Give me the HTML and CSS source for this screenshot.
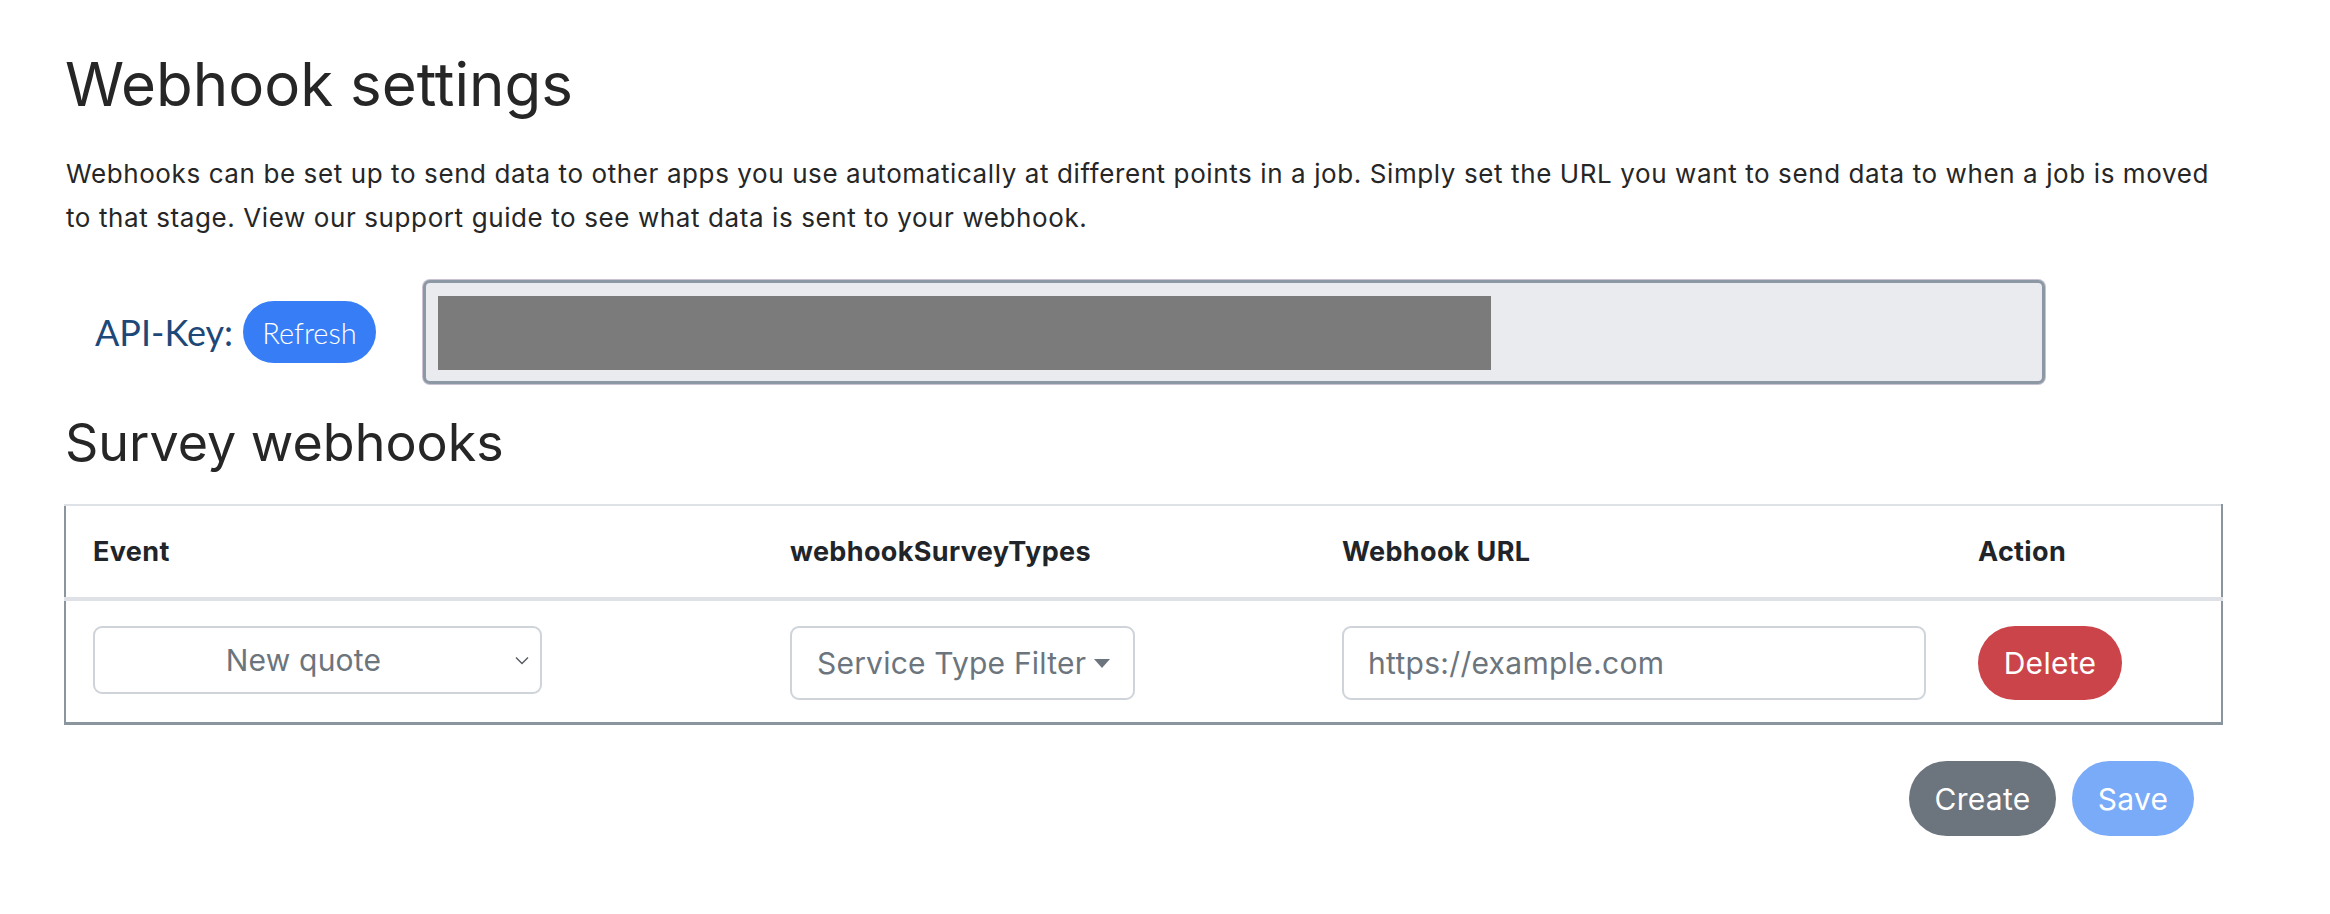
FILE: index.html
```html
<!DOCTYPE html>
<html lang="en">

<head>
    <meta charset="UTF-8">
    <meta name="viewport" content="width=device-width, initial-scale=1.0">
    <title>Webhook settings</title>
    <link rel="stylesheet" href="styles.css">
</head>

<body>
    <div class="container">
        <h1>Webhook settings</h1>
        <p class="intro">Webhooks can be set up to send data to other apps you use automatically at different points in a job. Simply set the URL you want to send data to when a job is moved to that stage. View our support guide to see what data is sent to your webhook.</p>

        <div class="api-row">
            <div class="api-label">
                <span class="api-text">API-Key:</span>
                <button class="btn btn-refresh">Refresh</button>
            </div>
            <div class="key-box">
                <div class="key-mask"></div>
            </div>
        </div>

        <h2>Survey webhooks</h2>

        <table class="hooks">
            <colgroup>
                <col class="col-event">
                <col class="col-types">
                <col class="col-url">
                <col class="col-action">
            </colgroup>
            <thead>
                <tr>
                    <th>Event</th>
                    <th>webhookSurveyTypes</th>
                    <th>Webhook URL</th>
                    <th>Action</th>
                </tr>
            </thead>
            <tbody>
                <tr>
                    <td>
                        <div class="select-wrap">
                            <select class="event-select">
                                <option>New quote</option>
                            </select>
                            <svg class="chevron" width="14" height="9" viewBox="0 0 14 9">
                                <path d="M1 1.5 L7 7.5 L13 1.5" fill="none" stroke="#555b61" stroke-width="1.4"/>
                            </svg>
                        </div>
                    </td>
                    <td>
                        <button class="filter-btn">Service Type Filter<span class="caret"></span></button>
                    </td>
                    <td>
                        <input class="url-input" type="text" placeholder="https://example.com">
                    </td>
                    <td>
                        <button class="btn btn-delete">Delete</button>
                    </td>
                </tr>
            </tbody>
        </table>

        <div class="actions">
            <button class="btn btn-create">Create</button>
            <button class="btn btn-save" disabled>Save</button>
        </div>
    </div>
</body>

</html>
```

FILE: styles.css
```css
body {
    margin: 0;
    padding: 0;
    font-family: "Inter", "Noto Sans", sans-serif;
    color: #212529;
    background-color: #ffffff;
}

.container {
    width: 2159px;
    padding: 47px 0 0 64px;
}

h1 {
    margin: 0 0 0 1px;
    font-size: 60px;
    font-weight: 400;
    line-height: 74px;
    color: #262626;
}

.intro {
    margin: 31px 0 0 2px;
    font-size: 26px;
    letter-spacing: 0.6px;
    line-height: 44px;
    color: #262626;
}

/* api key row */
.api-row {
    display: grid;
    grid-template-columns: 359px 1622px;
    margin-top: 40px;
    align-items: center;
}

.api-label {
    display: flex;
    align-items: center;
    gap: 10px;
    padding-left: 31px;
}

.api-text {
    font-family: "Lato", sans-serif;
    font-size: 36px;
    color: #1d4878;
}

.btn {
    border: none;
    border-radius: 40px;
    color: #ffffff;
    font-family: "Inter", sans-serif;
    font-size: 30px;
    letter-spacing: 0.3px;
    cursor: pointer;
    padding: 0;
}

.btn-refresh {
    width: 133px;
    height: 62px;
    background-color: #377ef6;
    font-family: "Lato", sans-serif;
    font-size: 29px;
    font-weight: 300;
    letter-spacing: 0;
}

.key-box {
    box-sizing: border-box;
    height: 104px;
    padding: 13px 12px 11px;
    border: 3px solid #8c98a4;
    border-radius: 7px;
    background-color: #e9ebef;
    box-shadow: 0 0 0 1px #c8c2d3;
}

.key-mask {
    width: 1053px;
    height: 74px;
    background-color: #7b7b7b;
}

h2 {
    margin: 28px 0 0 1px;
    font-size: 52px;
    font-weight: 400;
    line-height: 62px;
    color: #262626;
}

/* table */
.hooks {
    width: 2159px;
    margin-top: 30px;
    border-collapse: collapse;
    table-layout: fixed;
    border-top: 2px solid #dee2e6;
    border-left: 2px solid #8a959e;
    border-right: 2px solid #8a959e;
    border-bottom: 3px solid #8a959e;
}

.col-event { width: 698px; }
.col-types { width: 552px; }
.col-url { width: 636px; }

.hooks th {
    padding: 28px 27px 27px;
    text-align: left;
    font-size: 27px;
    letter-spacing: 0.35px;
    font-weight: 700;
    line-height: 36px;
    color: #212529;
    border-bottom: 4px solid #dee2e6;
}

.hooks td {
    padding: 25px 27px 22px;
    vertical-align: top;
}

.select-wrap {
    position: relative;
    width: 449px;
}

.event-select {
    appearance: none;
    width: 449px;
    height: 68px;
    padding: 0 28px 0 0;
    border: 2px solid #ced4da;
    border-radius: 9px;
    background-color: #ffffff;
    font-family: "Inter", sans-serif;
    font-size: 30px;
    letter-spacing: 0.2px;
    color: #6c757d;
    text-align: center;
    text-align-last: center;
}

.chevron {
    position: absolute;
    right: 13px;
    top: 30px;
}

.filter-btn {
    display: flex;
    align-items: center;
    width: 345px;
    height: 74px;
    padding: 0 0 0 25px;
    border: 2px solid #ced4da;
    border-radius: 9px;
    background-color: #ffffff;
    font-family: "Inter", sans-serif;
    font-size: 30px;
    letter-spacing: 0.2px;
    color: #6c757d;
}

.caret {
    display: inline-block;
    margin-left: 8px;
    border-top: 9px solid #6c757d;
    border-left: 8px solid transparent;
    border-right: 8px solid transparent;
}

.url-input {
    box-sizing: border-box;
    width: 584px;
    height: 74px;
    padding: 0 24px;
    border: 2px solid #ced4da;
    border-radius: 9px;
    font-family: "Inter", sans-serif;
    font-size: 30px;
    letter-spacing: 0.3px;
}

.url-input::placeholder {
    color: #6c757d;
}

.btn-delete {
    width: 144px;
    height: 74px;
    background-color: #cb444a;
}

/* bottom buttons */
.actions {
    display: flex;
    justify-content: flex-end;
    gap: 16px;
    margin-top: 36px;
    padding-right: 29px;
}

.btn-create {
    width: 147px;
    height: 75px;
    background-color: #6c757d;
}

.btn-save {
    width: 122px;
    height: 75px;
    background-color: #7aabf8;
    cursor: default;
}
```
